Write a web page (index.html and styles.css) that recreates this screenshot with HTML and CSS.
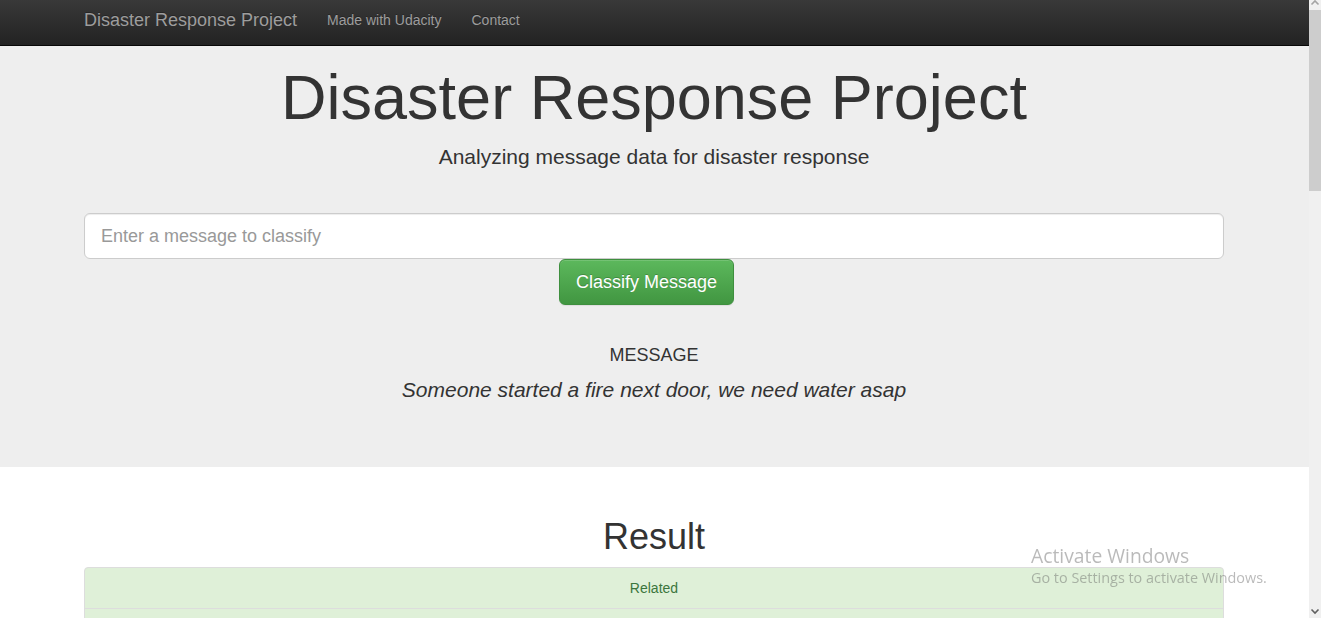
FILE: index.html
```html
<!DOCTYPE html>
<html lang="en">
<head>
<meta charset="utf-8">
<title>Disaster Response Project</title>
<link rel="stylesheet" href="styles.css">
</head>
<body>
<div class="page">
  <nav class="navbar">
    <div class="container nav-inner">
      <a class="brand" href="#">Disaster Response Project</a>
      <ul class="nav-links">
        <li><a href="#">Made with Udacity</a></li>
        <li><a href="#">Contact</a></li>
      </ul>
    </div>
  </nav>

  <section class="jumbotron">
    <div class="container">
      <h1 class="title">Disaster Response Project</h1>
      <p class="lead">Analyzing message data for disaster response</p>
      <form class="classify-form">
        <input class="input-lg" type="text" placeholder="Enter a message to classify">
        <div class="btn-row">
          <button class="btn-classify" type="button">Classify Message</button>
        </div>
      </form>
      <div class="message-block">
        <h4 class="msg-label">MESSAGE</h4>
        <p class="msg-text">Someone started a fire next door, we need water asap</p>
      </div>
    </div>
  </section>

  <section class="container results">
    <h1 class="result-title">Result</h1>
    <ul class="list-group">
      <li class="list-item success">Related</li>
      <li class="list-item success list-item-empty"></li>
    </ul>
  </section>
</div>

<div class="scrollbar">
  <svg class="arrow-up" width="12" height="8" viewBox="0 0 12 8"><path d="M2.5 5.5 L6 2 L9.5 5.5" fill="none" stroke="#a3a3a3" stroke-width="1.6"/></svg>
  <div class="thumb"></div>
  <svg class="arrow-down" width="12" height="8" viewBox="0 0 12 8"><path d="M2.5 2.5 L6 6 L9.5 2.5" fill="none" stroke="#606060" stroke-width="1.6"/></svg>
</div>

<div class="activate">
  <div class="act-title">Activate Windows</div>
  <div class="act-sub">Go to Settings to activate Windows.</div>
</div>
</body>
</html>
```

FILE: styles.css
```css
* { box-sizing: border-box; }

html, body {
  margin: 0;
  padding: 0;
  overflow: hidden;
  background: #fff;
}

body {
  font-family: "Liberation Sans", Arial, sans-serif;
  font-size: 14px;
  line-height: 20px;
  color: #333;
}

.page {
  width: 1309px;
  height: 618px;
  overflow: hidden;
}

.container {
  width: 1171px;
  padding: 0 16px 0 15px;
  margin: 0 auto;
}

/* Navbar */
.navbar {
  height: 46px;
  background: linear-gradient(to bottom, #393939 0%, #222 100%);
  border-bottom: 1px solid #080808;
}

.nav-inner {
  display: flex;
  align-items: flex-start;
  padding-top: 10px;
}

.brand {
  font-size: 18px;
  line-height: 20px;
  padding: 0 15px;
  margin-left: -15px;
  color: #9d9d9d;
  text-decoration: none;
  text-shadow: 0 -1px 0 rgba(0, 0, 0, .25);
}

.nav-links {
  display: flex;
  list-style: none;
  margin: 0;
  padding: 0;
}

.nav-links a {
  display: block;
  padding: 0 15px;
  font-size: 14px;
  line-height: 20px;
  color: #9d9d9d;
  text-decoration: none;
  text-shadow: 0 -1px 0 rgba(0, 0, 0, .25);
}

/* Jumbotron */
.jumbotron {
  background: #eee;
  height: 421px;
  padding-top: 17px;
  text-align: center;
}

.title {
  margin: 0;
  font-size: 63px;
  line-height: 69px;
  font-weight: 500;
  color: #333;
}

.lead {
  margin: 10px 0 0;
  font-size: 21px;
  line-height: 29px;
  color: #333;
}

.classify-form {
  margin-top: 42px;
  text-align: left;
}

.input-lg {
  display: block;
  width: 100%;
  height: 46px;
  padding: 10px 16px;
  font-family: "Liberation Sans", Arial, sans-serif;
  font-size: 18px;
  line-height: 24px;
  color: #555;
  background: #fff;
  border: 1px solid #ccc;
  border-radius: 6px;
  box-shadow: inset 0 1px 1px rgba(0, 0, 0, .075);
  outline: none;
}

.input-lg::placeholder { color: #999; }

.btn-row {
  padding-left: 475px;
}

.btn-classify {
  height: 46px;
  padding: 10px 16px;
  font-family: "Liberation Sans", Arial, sans-serif;
  font-size: 18px;
  line-height: 24px;
  color: #fff;
  text-shadow: 0 -1px 0 rgba(0, 0, 0, .2);
  background: linear-gradient(to bottom, #5cb85c 0%, #419641 100%);
  border: 1px solid #3e8f3e;
  border-radius: 6px;
  box-shadow: inset 0 1px 0 rgba(255, 255, 255, .15), 0 1px 1px rgba(0, 0, 0, .075);
}

.message-block {
  margin-top: 40px;
}

.msg-label {
  margin: 0;
  font-size: 18px;
  line-height: 20px;
  font-weight: 500;
  color: #333;
}

.msg-text {
  margin: 10px 0 0;
  font-size: 21px;
  line-height: 30px;
  font-style: italic;
  color: #333;
}

/* Results */
.results {
  text-align: center;
}

.result-title {
  margin: 50px 0 10px;
  font-size: 36px;
  line-height: 40px;
  font-weight: 500;
  color: #333;
}

.list-group {
  list-style: none;
  margin: 0;
  padding: 0;
}

.list-item {
  padding: 10px 15px;
  font-size: 14px;
  line-height: 20px;
  border: 1px solid #ddd;
  margin-bottom: -1px;
  background: #fff;
}

.list-item-empty {
  height: 42px;
}

.list-item:first-child {
  border-radius: 4px 4px 0 0;
}

.list-item.success {
  background: #dff0d8;
  color: #3c763d;
}

/* Fake scrollbar */
.scrollbar {
  position: fixed;
  top: 0;
  right: 0;
  width: 12px;
  height: 618px;
  background: #f0f0f0;
}

.thumb {
  position: absolute;
  top: 10px;
  left: 0;
  width: 12px;
  height: 181px;
  background: #cdcdcd;
}

.arrow-up {
  position: absolute;
  top: -1px;
  left: 0;
}

.arrow-down {
  position: absolute;
  bottom: 3px;
  left: 0;
}

/* Windows watermark */
.activate {
  position: fixed;
  left: 1031px;
  top: 543px;
  font-family: "Open Sans", "Noto Sans", sans-serif;
  color: rgba(90, 90, 90, .42);
  pointer-events: none;
}

.act-title {
  font-size: 19.3px;
  line-height: 25px;
}

.act-sub {
  font-size: 14.4px;
  line-height: 20px;
}
```
